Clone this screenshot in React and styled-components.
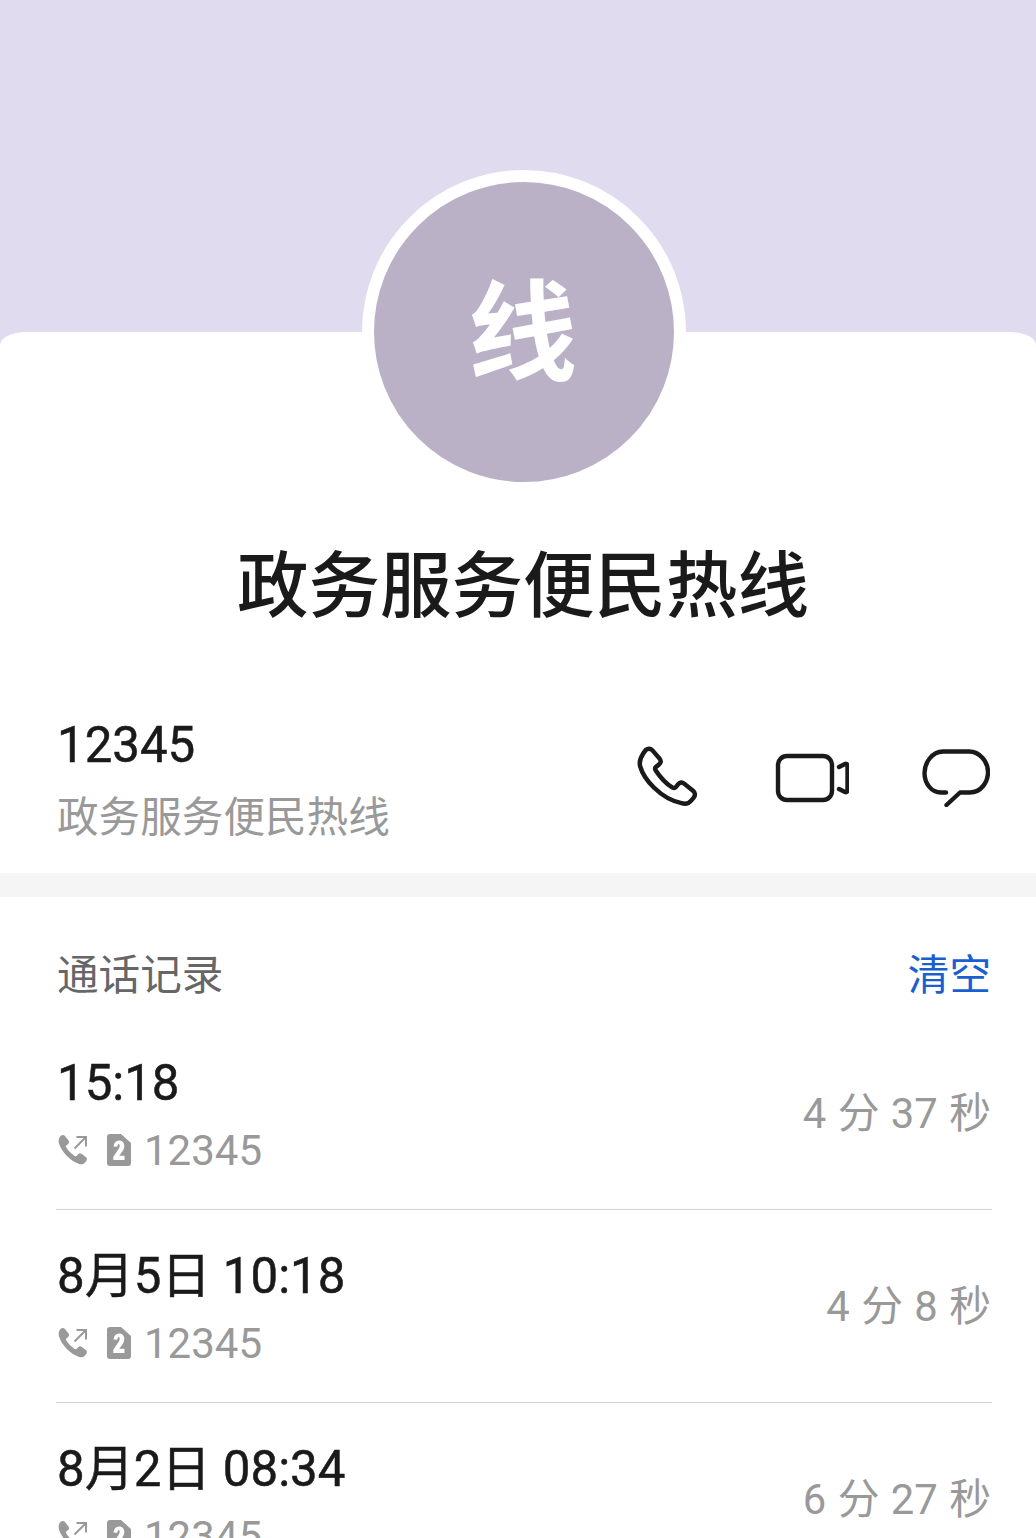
import React from "react";
import styled, { createGlobalStyle } from "styled-components";

const GlobalStyle = createGlobalStyle`
  html, body {
    margin: 0;
    padding: 0;
    background: #fff;
  }
  body {
    font-family: Roboto, "Noto Sans CJK SC", sans-serif;
  }
`;

const Page = styled.div`
  width: 1036px;
  height: 1538px;
  overflow: hidden;
  background: #e0dbee;
`;

const Banner = styled.div`
  height: 332px;
`;

const Sheet = styled.div`
  display: flow-root;
  background: #fff;
  border-radius: 26px 26px 0 0 / 13px 13px 0 0;
`;

const Avatar = styled.div`
  width: 324px;
  height: 324px;
  box-sizing: border-box;
  margin: -162px 0 0 362px;
  padding: 6px 3px 0 0;
  border: 12px solid #fff;
  border-radius: 50%;
  background: #bbb1c6;
  color: #fff;
  font-size: 109px;
  font-weight: 700;
  display: flex;
  align-items: center;
  justify-content: center;
  line-height: 286px;
`;

const Title = styled.h1`
  margin: 46px 0 0;
  padding-left: 10px;
  height: 94px;
  line-height: 94px;
  font-size: 71.5px;
  font-weight: 500;
  color: #1a1a1a;
  text-align: center;
`;

const ContactRow = styled.div`
  margin-top: 79px;
  height: 160px;
  padding: 0 46px 0 57px;
  display: flex;
  justify-content: space-between;
  align-items: flex-start;
`;

const ContactText = styled.div`
  display: flex;
  flex-direction: column;
`;

const Number = styled.div`
  font-size: 49.2px;
  font-weight: 400;
  -webkit-text-stroke: 0.5px #1a1a1a;
  line-height: 64px;
  color: #1a1a1a;
`;

const Sub = styled.div`
  margin-top: 13px;
  font-size: 41.6px;
  line-height: 56px;
  color: #999;
`;

const Actions = styled.div`
  display: flex;
  align-items: center;
  gap: 73px;
  height: 130px;
`;

const PhoneSvg = styled.svg`
  margin: 4px -2px 0 0;
`;

const Gap = styled.div`
  height: 24px;
  background: #f5f5f5;
`;

const Section = styled.div`
  padding: 0 45px 0 56px;
`;

const SectionHead = styled.div`
  height: 120px;
  padding: 51px 0 0 1px;
  box-sizing: border-box;
  display: flex;
  justify-content: space-between;
  font-size: 41.6px;
  line-height: 56px;
  color: #666;
`;

const Clear = styled.span`
  color: #1a5fd0;
`;

const Row = styled.div`
  height: 193px;
  box-sizing: border-box;
  margin-right: -1px;
  border-bottom: 1px solid ${(props) => (props.last ? "transparent" : "#d4d4d4")};
  padding: 0 1px 0 1px;
  display: flex;
  justify-content: space-between;
  align-items: center;
`;

const RowLeft = styled.div`
  margin-top: 8px;
  display: flex;
  flex-direction: column;
`;

const Time = styled.div`
  font-size: 49.2px;
  font-weight: 400;
  -webkit-text-stroke: 0.5px #1a1a1a;
  line-height: 64px;
  color: #1a1a1a;
`;

const Meta = styled.div`
  margin-top: 4px;
  display: flex;
  align-items: center;
  font-size: 42px;
  line-height: 64px;
  color: #999;
`;

const MetaIcons = styled.div`
  display: flex;
  align-items: center;
  gap: 17px;
  margin: -3px 13px 0 1px;
`;

const Duration = styled.div`
  margin-bottom: 6px;
  font-size: 41.8px;
  color: #999;
  word-spacing: 1px;
`;

const PhoneIcon = () => (
  <PhoneSvg width="68" height="68" viewBox="0 0 62 62" fill="none" stroke="#1a1a1a" strokeWidth="4.1" strokeLinejoin="round">
    <path d="M9 3.500c2-1.500 4.500-1.200 6 .5l6.500 7.500c1.600 1.900 1.300 3.800-.5 5.300l-2.500 2c-1.100.9-1.300 2.300-.5 3.500 3.300 5 9.500 12 15 15.500 1.300.8 2.600.6 3.500-.5l2-2.500c1.500-1.800 3.600-2 5.400-.5l8.100 6.500c2 1.700 2.300 4.300.6 6.300l-2.100 2.500c-2.200 2.700-5.500 3.700-9 2.500C22 48 7 30 3.800 18.500c-1-3.800 0-7.500 2.700-11.500z" />
  </PhoneSvg>
);

const VideoIcon = () => (
  <svg width="74" height="50" viewBox="0 0 74 50" fill="none" stroke="#1a1a1a" strokeWidth="4.4" strokeLinecap="round" strokeLinejoin="round">
    <rect x="3" y="3" width="54" height="44" rx="9" />
    <path d="M64 14l6-3c1.300-.6 2.500.2 2.500 1.500v25c0 1.300-1.200 2.100-2.500 1.500l-6-3" />
  </svg>
);

const ChatIcon = () => (
  <svg width="68" height="58" viewBox="0 0 68 58" fill="none" stroke="#1a1a1a" strokeWidth="4.4" strokeLinecap="round" strokeLinejoin="round">
    <path d="M24 43.500H19C9 43.500 2.500 34 2.500 24S10 2.500 21 2.500h26C58 2.500 66 13 66 23s-7 20.500-18 20.500H38L24.500 56" />
  </svg>
);

const CallOutIcon = () => (
  <svg width="32" height="32" viewBox="0 0 32 32" fill="#999">
    <path d="M3 1.500c1.500-1 3-.7 4 .6l3.500 4.500c.9 1.200.7 2.400-.3 3.300l-1.700 1.400c-.7.600-.8 1.300-.3 2 2 3.200 5 6.500 8.500 8.700.8.500 1.500.4 2.100-.3l1.500-1.700c.9-1 2.100-1.200 3.200-.3l4.300 3.400c1.300 1 1.500 2.600.5 3.800l-1.300 1.500c-1.500 1.800-3.600 2.300-5.800 1.600C12 27 3.500 17.500 1 9.500.2 6.500.6 3.500 3 1.500z" />
    <path d="M16.500 14.500L27.500 3.500M18.500 3H28v9.500" fill="none" stroke="#999" strokeWidth="2" />
  </svg>
);

const SimIcon = () => (
  <svg width="24" height="32" viewBox="0 0 24 32">
    <path d="M3 0h11l10 9v20a3 3 0 0 1-3 3H3a3 3 0 0 1-3-3V3a3 3 0 0 1 3-3z" fill="#999" />
    <path d="M6.500 12.500C7 8.500 9 6.500 12 6.500c3.200 0 5.300 2.200 5.300 5.500 0 2.600-1.300 4.700-3.200 7.300l-1.800 2.500h5.200V26H6.300v-3.300l4.400-6.400c1.400-2 2-3.200 2-4.300 0-1.200-.4-1.900-1-1.900-.7 0-1.200.8-1.400 2.700z" fill="#fff" />
  </svg>
);

const calls = [
  { time: "15:18", duration: "4 分 37 秒" },
  { time: "8月5日 10:18", duration: "4 分 8 秒" },
  { time: "8月2日 08:34", duration: "6 分 27 秒" },
];

const App = () => (
  <Page>
    <GlobalStyle />
    <Banner />
    <Sheet>
      <Avatar>线</Avatar>
      <Title>政务服务便民热线</Title>
      <ContactRow>
        <ContactText>
          <Number>12345</Number>
          <Sub>政务服务便民热线</Sub>
        </ContactText>
        <Actions>
          <PhoneIcon />
          <VideoIcon />
          <ChatIcon />
        </Actions>
      </ContactRow>
      <Gap />
      <Section>
        <SectionHead>
          <span>通话记录</span>
          <Clear>清空</Clear>
        </SectionHead>
        {calls.map((call, i) => (
          <Row key={i} last={i === calls.length - 1}>
            <RowLeft>
              <Time>{call.time}</Time>
              <Meta>
                <MetaIcons>
                  <CallOutIcon />
                  <SimIcon />
                </MetaIcons>
                12345
              </Meta>
            </RowLeft>
            <Duration>{call.duration}</Duration>
          </Row>
        ))}
      </Section>
    </Sheet>
  </Page>
);

export default App;
